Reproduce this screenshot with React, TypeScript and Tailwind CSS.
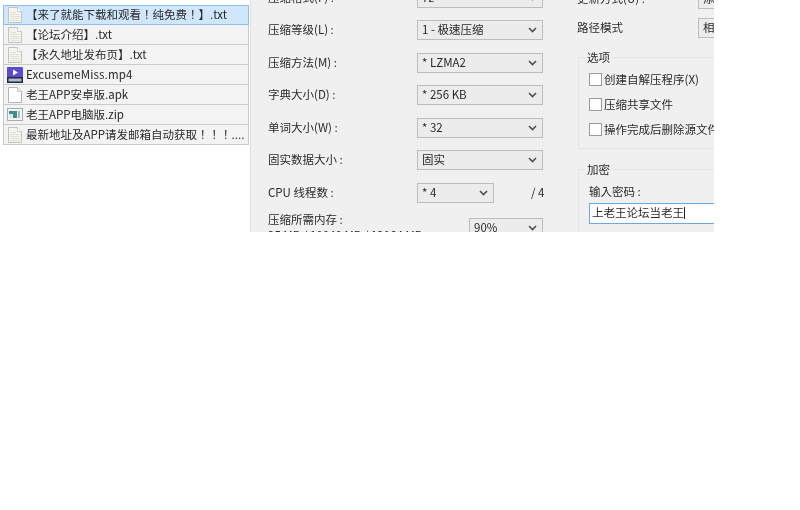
import React from "react";

function TxtIcon() {
  return (
    <svg width="14" height="16" viewBox="0 0 14 16" className="shrink-0">
      <path d="M0.5 0.5H9.5L13.5 4.5V15.5H0.5Z" fill="#f4f4ee" stroke="#c2c2c2" />
      <path d="M9.5 0.5V4.5H13.5" fill="#fff" stroke="#cccccc" />
      <path d="M2.5 5.5H8M2.5 7.5H11.5M2.5 9.5H11.5M2.5 11.5H11.5M2.5 13.5H11.5" stroke="#e0e0d8" />
    </svg>
  );
}
function ApkIcon() {
  return (
    <svg width="14" height="16" viewBox="0 0 14 16" className="shrink-0">
      <path d="M0.5 0.5H9.5L13.5 4.5V15.5H0.5Z" fill="#fff" stroke="#b4b4b4" />
      <path d="M9.5 0.5V4.5H13.5" fill="#f2f2f2" stroke="#c8c8c8" />
    </svg>
  );
}
function Mp4Icon() {
  return (
    <svg width="16" height="16" viewBox="0 0 16 16" className="shrink-0">
      <rect x="0" y="0" width="16" height="11" rx="1" fill="#5b4ccf" />
      <path d="M6 2.5L11 5.5L6 8.5Z" fill="#fff" />
      <rect x="0" y="10" width="16" height="6" fill="#1f2a44" />
      <rect x="1.5" y="11.5" width="13" height="3" fill="#e6e8ef" opacity="0.75" />
    </svg>
  );
}
function ZipIcon() {
  return (
    <svg width="16" height="13" viewBox="0 0 16 13" className="shrink-0">
      <rect x="0.5" y="0.5" width="15" height="12" fill="#f4f4f4" stroke="#a3adb4" />
      <rect x="2" y="3" width="8" height="7" fill="#3f8f88" />
      <rect x="2" y="6" width="4" height="4" fill="#dbe7ea" />
      <path d="M12 3V10" stroke="#aeb5bb" strokeWidth="2" />
    </svg>
  );
}

const files = [
  { icon: <TxtIcon />, name: "【来了就能下载和观看！纯免费！】.txt", active: true },
  { icon: <TxtIcon />, name: "【论坛介绍】.txt" },
  { icon: <TxtIcon />, name: "【永久地址发布页】.txt" },
  { icon: <Mp4Icon />, name: "ExcusemeMiss.mp4", latin: true },
  { icon: <ApkIcon />, name: "老王APP安卓版.apk" },
  { icon: <ZipIcon />, name: "老王APP电脑版.zip" },
  { icon: <TxtIcon />, name: "最新地址及APP请发邮箱自动获取！！！...." },
];

function FileRow({ icon, name, active, latin }: { icon: React.ReactNode; name: string; active?: boolean; latin?: boolean }) {
  return (
    <div
      className={
        active
          ? "h-5 flex items-center gap-[3px] pl-[3px] border border-[#8fbfee] bg-[#cfe6fb] whitespace-nowrap overflow-hidden"
          : "h-5 flex items-center gap-[3px] pl-[3px] border-x border-b border-[#cacaca] bg-[#f3f3f3] whitespace-nowrap overflow-hidden"
      }
    >
      <span className="w-4 flex justify-center shrink-0">{icon}</span>
      <span className={latin ? "tracking-[0.15px]" : "tracking-normal"}>{name}</span>
    </div>
  );
}

function Chevron() {
  return (
    <svg width="9" height="6" viewBox="0 0 9 6" className="shrink-0">
      <path d="M1 1L4.5 4.5L8 1" fill="none" stroke="#505050" strokeWidth="1.6" />
    </svg>
  );
}

function Select({ value, className }: { value: string; className: string }) {
  return (
    <div
      className={
        "h-5 flex items-center justify-between pl-[4px] pr-[5px] border border-[#bcbcbc] bg-[#ececec] whitespace-nowrap overflow-hidden shrink-0 " +
        className
      }
    >
      <span>{value}</span>
      <Chevron />
    </div>
  );
}

function Row({ label, children }: { label: string; children: React.ReactNode }) {
  return (
    <div className="h-5 flex items-center">
      <span className="w-[149px] shrink-0 whitespace-nowrap">{label}</span>
      {children}
    </div>
  );
}

function Checkbox({ label }: { label: string }) {
  return (
    <div className="h-[13px] flex items-center gap-[2px] whitespace-nowrap">
      <span className="w-[13px] h-[13px] shrink-0 border border-[#9a9a9a] bg-white" />
      <span>{label}</span>
    </div>
  );
}

export default function App() {
  return (
    <div className="w-[800px] h-[510px] bg-white overflow-hidden flex items-start text-[11.5px] leading-none text-[#2a2a2a] blur-[0.35px]">
      <div className="w-[250px] shrink-0 pl-[3px] pr-[1px] pt-[5px] font-['Noto_Sans_CJK_TC','Noto_Sans',sans-serif]">
        {files.map((f) => (
          <FileRow key={f.name} icon={f.icon} name={f.name} active={f.active} latin={f.latin} />
        ))}
      </div>

      <div className="w-[464px] h-[232px] shrink-0 overflow-hidden flex bg-[#f0f0f0] border-l border-[#e0e0e0] font-['Noto_Sans_CJK_TC','Noto_Sans',sans-serif]">
        {/* left column */}
        <div className="w-[326px] shrink-0 pl-[17px] -mt-[12.5px] flex flex-col gap-[12.5px]">
          <Row label="压缩格式(F) :"><Select value="7z" className="w-[126px]" /></Row>
          <Row label="压缩等级(L) :"><Select value="1 - 极速压缩" className="w-[126px]" /></Row>
          <Row label="压缩方法(M) :"><Select value="* LZMA2" className="w-[126px]" /></Row>
          <Row label="字典大小(D) :"><Select value="* 256 KB" className="w-[126px]" /></Row>
          <Row label="单词大小(W) :"><Select value="* 32" className="w-[126px]" /></Row>
          <Row label="固实数据大小 :"><Select value="固实" className="w-[126px]" /></Row>
          <Row label="CPU 线程数 :">
            <Select value="* 4" className="w-[77px]" />
            <span className="ml-[37px] whitespace-nowrap">/ 4</span>
          </Row>
          <div className="flex items-start mt-[3px]">
            <div className="w-[201px] shrink-0 whitespace-nowrap flex flex-col gap-[4px] -mt-[4px]">
              <span>压缩所需内存 :</span>
              <span>25 MB / 10040 MB / 12164 MB</span>
            </div>
            <Select value="90%" className="w-[74px]" />
          </div>
        </div>

        {/* right column */}
        <div className="flex-1 min-w-0 flex flex-col -mt-[11px]">
          <div className="h-5 flex items-center">
            <span className="w-[121px] shrink-0 whitespace-nowrap">更新方式(U) :</span>
            <Select value="添加并替换文件" className="w-[126px]" />
          </div>
          <div className="h-5 flex items-center mt-[9px]">
            <span className="w-[121px] shrink-0 whitespace-nowrap">路径模式</span>
            <Select value="相对路径" className="w-[126px]" />
          </div>

          <div className="relative mt-[19px] ml-[1px] h-[92px] w-[200px] shrink-0 border border-[#e4e4e4] pl-[10px] pt-[15px] flex flex-col gap-[12px]">
            <span className="absolute left-[6px] -top-[6px] px-[2px] bg-[#f0f0f0]">选项</span>
            <Checkbox label="创建自解压程序(X)" />
            <Checkbox label="压缩共享文件" />
            <Checkbox label="操作完成后删除源文件" />
          </div>

          <div className="relative mt-[20px] ml-[1px] h-[90px] w-[200px] shrink-0 border border-[#e4e4e4] pl-[10px] pt-[16px]">
            <span className="absolute left-[6px] -top-[6px] px-[2px] bg-[#f0f0f0]">加密</span>
            <div className="whitespace-nowrap">输入密码 :</div>
            <div className="mt-[5px] h-[21px] w-[160px] flex items-center pl-[2px] border border-[#6ea8dc] bg-white whitespace-nowrap">
              上老王论坛当老王<span className="w-px h-[12px] bg-[#222]" />
            </div>
          </div>
        </div>
      </div>
    </div>
  );
}
